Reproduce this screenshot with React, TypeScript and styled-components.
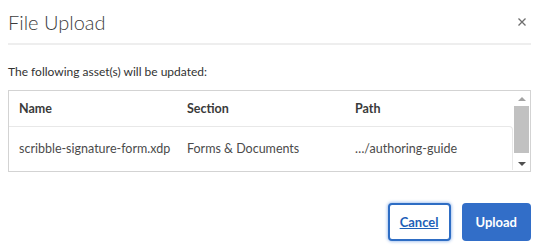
import React from "react";
import styled, { createGlobalStyle } from "styled-components";

const GlobalStyle = createGlobalStyle`
  html, body {
    margin: 0;
    padding: 0;
    background: #ffffff;
  }
  body {
    font-family: Lato, "Open Sans", sans-serif;
    color: #323232;
  }
`;

const Dialog = styled.div`
  width: 538px;
  height: 252px;
  box-sizing: border-box;
  padding: 0 7px 0 8px;
  display: flex;
  flex-direction: column;
`;

const Header = styled.div`
  height: 43px;
  display: flex;
  align-items: center;
  justify-content: space-between;
  border-bottom: 2px solid #eeeeee;
`;

const Title = styled.h2`
  margin: 0;
  font-size: 20px;
  font-weight: 300;
  color: #3c3c3c;
`;

const CloseButton = styled.button`
  border: 0;
  background: none;
  padding: 0;
  margin-right: 4px;
  width: 10px;
  height: 10px;
  display: flex;
  align-items: center;
  justify-content: center;
  cursor: pointer;
`;

const Message = styled.p`
  margin: 19px 0 10px;
  font-size: 12px;
  line-height: 16px;
  color: #323232;
`;

const TableFrame = styled.div`
  display: flex;
  border: 1px solid #d3d3d3;
  height: 80px;
`;

const Table = styled.div`
  flex: 1;
  display: flex;
  flex-direction: column;
`;

const Row = styled.div<{ $body?: boolean }>`
  display: grid;
  grid-template-columns: 168px 168px 1fr;
  align-items: center;
  height: ${(p) => (p.$body ? "44px" : "35px")};
  box-sizing: border-box;
  padding-left: 10px;
  font-size: 12.5px;
  font-weight: ${(p) => (p.$body ? 400 : 700)};
  color: ${(p) => (p.$body ? "#4b4b4b" : "#3a3a3a")};
  border: ${(p) => (p.$body ? "1px solid #e8e8e8" : "0")};
  border-left: 0;
  border-bottom: 0;
  border-radius: ${(p) => (p.$body ? "0 4px 0 0" : "0")};
`;

const Scrollbar = styled.div`
  width: 17px;
  display: flex;
  flex-direction: column;
  align-items: center;
  background: #ffffff;
`;

const Arrow = styled.div<{ $down?: boolean }>`
  height: 15px;
  width: 100%;
  display: flex;
  align-items: center;
  justify-content: center;
  &::before {
    content: "";
    width: 0;
    height: 0;
    border-left: 4px solid transparent;
    border-right: 4px solid transparent;
    ${(p) =>
      p.$down
        ? "border-top: 4px solid #505050;"
        : "border-bottom: 4px solid #a3a3a3;"}
  }
`;

const Thumb = styled.div`
  flex: 1;
  width: 15px;
  background: #c1c1c1;
  margin: 0 0 3px;
`;

const Footer = styled.div`
  margin-top: 31px;
  display: flex;
  justify-content: flex-end;
  gap: 11px;
`;

const Button = styled.button<{ $primary?: boolean }>`
  height: 38px;
  box-sizing: border-box;
  border-radius: 4px;
  font-family: Lato, "Open Sans", sans-serif;
  font-size: 13px;
  font-weight: 700;
  cursor: pointer;
  padding: 0 ${(p) => (p.$primary ? "14px" : "10px")};
  background: ${(p) => (p.$primary ? "#326ec8" : "#ffffff")};
  color: ${(p) => (p.$primary ? "#ffffff" : "#1d5fb8")};
  border: ${(p) => (p.$primary ? "0" : "2px solid #2e6dc4")};
  box-shadow: ${(p) => (p.$primary ? "none" : "0 0 3px 1px rgba(70, 130, 220, 0.45)")};
  text-decoration: ${(p) => (p.$primary ? "none" : "underline")};
`;

const assets = [
  { name: "scribble-signature-form.xdp", section: "Forms & Documents", path: "…/authoring-guide" },
];

export default function App() {
  return (
    <>
      <GlobalStyle />
      <Dialog>
        <Header>
          <Title>File Upload</Title>
          <CloseButton aria-label="Close">
            <svg width="8" height="8" viewBox="0 0 8 8">
              <path d="M0.5 0.5 L7.5 7.5 M7.5 0.5 L0.5 7.5" stroke="#6e6e6e" strokeWidth="1.3" />
            </svg>
          </CloseButton>
        </Header>
        <Message>The following asset(s) will be updated:</Message>
        <TableFrame>
          <Table>
            <Row>
              <span>Name</span>
              <span>Section</span>
              <span>Path</span>
            </Row>
            {assets.map((a) => (
              <Row $body key={a.name}>
                <span>{a.name}</span>
                <span>{a.section}</span>
                <span>{a.path}</span>
              </Row>
            ))}
          </Table>
          <Scrollbar>
            <Arrow />
            <Thumb />
            <Arrow $down />
          </Scrollbar>
        </TableFrame>
        <Footer>
          <Button>Cancel</Button>
          <Button $primary>Upload</Button>
        </Footer>
      </Dialog>
    </>
  );
}
